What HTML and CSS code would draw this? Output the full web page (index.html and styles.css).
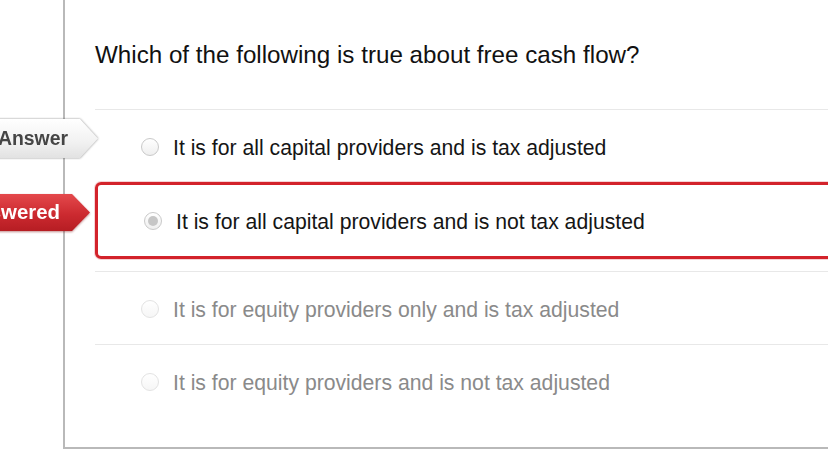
FILE: index.html
```html
<!DOCTYPE html>
<html lang="en">
<head>
    <meta charset="UTF-8">
    <title>Quiz Results</title>
    <link rel="stylesheet" href="styles.css">
</head>
<body>
    <div class="quiz">
        <div class="question">Which of the following is true about free cash flow?</div>

        <div class="answers">
            <div class="answer">
                <div class="tag tag-correct"><span>Correct Answer</span></div>
                <span class="radio"></span>
                <span class="answer-text">It is for all capital providers and is tax adjusted</span>
            </div>
            <div class="answer selected">
                <div class="tag tag-wrong"><span>You Answered</span></div>
                <span class="radio checked"></span>
                <span class="answer-text">It is for all capital providers and is not tax adjusted</span>
            </div>
            <div class="answer faded">
                <span class="radio"></span>
                <span class="answer-text">It is for equity providers only and is tax adjusted</span>
            </div>
            <div class="answer faded">
                <span class="radio"></span>
                <span class="answer-text">It is for equity providers and is not tax adjusted</span>
            </div>
        </div>
    </div>
</body>
</html>
```

FILE: styles.css
```css
body {
    margin: 0;
    padding: 0;
    background-color: #fff;
    font-family: 'Liberation Sans', Arial, sans-serif;
    color: #111;
    overflow: hidden;
}
.quiz {
    margin-left: 63px;
    width: 900px;
    border-left: 2px solid #b9b9b9;
    border-bottom: 2px solid #b9b9b9;
    padding: 0 0 30px 30px;
}
.question {
    padding-top: 40px;
    font-size: 24.2px;
    line-height: 30px;
    margin-bottom: 39px;
}
.answer {
    position: relative;
    display: flex;
    align-items: center;
    height: 69px;
    padding: 3px 0 0 46px;
    border-top: 1px solid #e8e8e8;
}
.answer.selected {
    height: 68px;
    border: 3px solid #d3232b;
    border-radius: 6px;
    margin-bottom: 12px;
    box-shadow: 0 0 0 1px rgba(211, 35, 43, 0.2);
}
.answer-text {
    font-size: 21.2px;
    color: #151515;
}
.answer.faded .answer-text {
    color: #8a8a8a;
}
.radio {
    box-sizing: border-box;
    width: 18px;
    height: 18px;
    margin: 0 14px 2px 0;
    border: 1px solid #c9c9c9;
    border-radius: 50%;
    background: linear-gradient(#fff, #efefef);
    display: flex;
    align-items: center;
    justify-content: center;
}
.radio.checked::after {
    content: "";
    width: 10px;
    height: 10px;
    border-radius: 50%;
    background-color: #c6c6c6;
}
.answer.faded .radio {
    border-color: #e3e3e3;
    background: linear-gradient(#fff, #f6f6f6);
}
.tag {
    position: absolute;
    right: 100%;
    white-space: nowrap;
}
.tag span {
    display: block;
    font-weight: bold;
    clip-path: polygon(0 0, calc(100% - 18px) 0, 100% 50%, calc(100% - 18px) 100%, 0 100%);
}
.tag-correct {
    top: 9px;
    margin-right: -3px;
    filter: drop-shadow(0 0 1px rgba(0, 0, 0, 0.45));
}
.tag-correct span {
    padding: 0 30px 0 12px;
    font-size: 19.4px;
    line-height: 39px;
    color: #454545;
    background: linear-gradient(#ffffff, #f1f1f1 60%, #e2e2e2);
}
.tag-wrong {
    top: 9px;
    margin-right: 8px;
    filter: drop-shadow(0 1px 1px rgba(120, 0, 0, 0.45));
}
.tag-wrong span {
    padding: 0 30px 0 12px;
    font-size: 20.4px;
    line-height: 37px;
    color: #fff;
    background: linear-gradient(#e4494c, #cc2a30 55%, #b61d23);
}
```
